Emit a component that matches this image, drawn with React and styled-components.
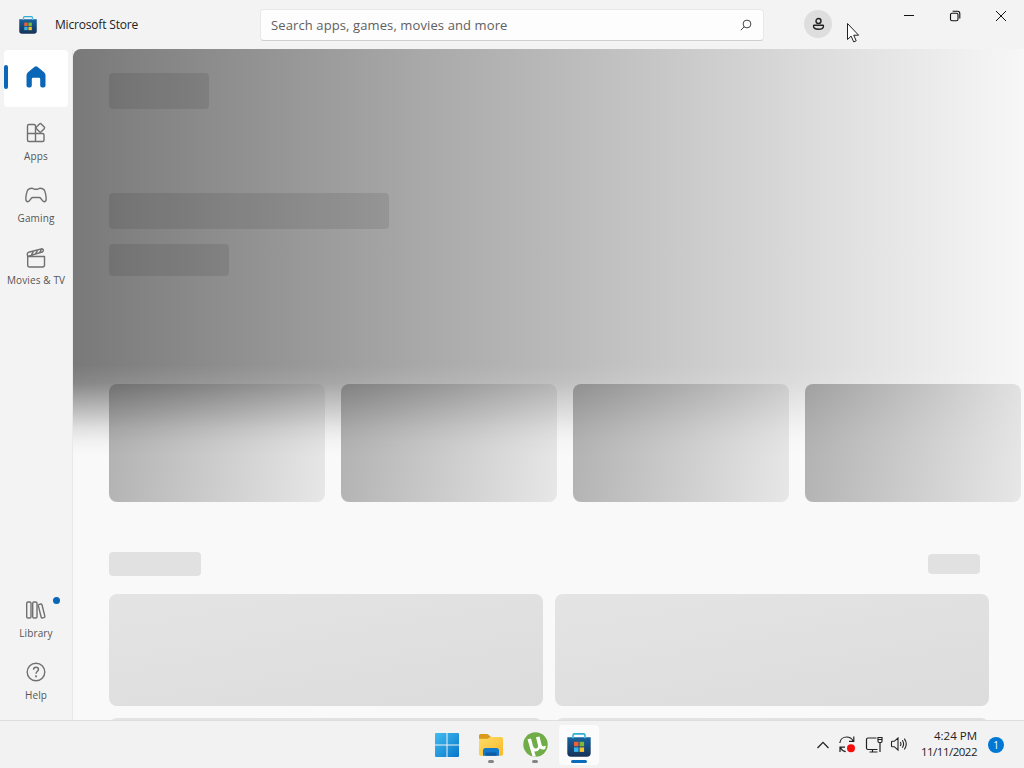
import React from 'react';
import styled, { createGlobalStyle } from 'styled-components';

const NAV_TOP = [
  { label: 'Apps', icon: AppsIcon },
  { label: 'Gaming', icon: GamingIcon },
  { label: 'Movies & TV', icon: MoviesIcon },
];

const NAV_BOTTOM = [
  { label: 'Library', icon: LibraryIcon, dot: true },
  { label: 'Help', icon: HelpIcon },
];

function App() {
  return (
    <>
      <GlobalStyle />
      <Desktop>
        <TitleBar />
        <Body>
          <Sidebar />
          <Content />
        </Body>
        <Taskbar />
        <Cursor width="14" height="22" viewBox="0 0 14 22">
          <path
            d="M1.500 1.500v16l3.600-3.400 2.600 5.800 2.500-1.100-2.500-5.600h4.900z"
            fill="#fff"
            stroke="#222"
            strokeWidth="1"
          />
        </Cursor>
      </Desktop>
    </>
  );
}

export default App;

function TitleBar() {
  return (
    <Header>
      <Brand>
        <StoreIcon size={18} />
        <AppName>Microsoft Store</AppName>
      </Brand>
      <SearchBox>
        <Placeholder>Search apps, games, movies and more</Placeholder>
        <svg width="12" height="12" viewBox="0 0 12 12" fill="none" stroke="#444">
          <circle cx="7" cy="5" r="3.9" />
          <path d="M4.200 7.800.8 11.200" />
        </svg>
      </SearchBox>
      <Avatar>
        <svg width="14" height="14" viewBox="0 0 14 14" fill="none" stroke="#222" strokeWidth="1.400">
          <circle cx="7.500" cy="4" r="2.500" />
          <path d="M3.200 8.200h8.600q.7 0 .7.700c0 2.300-2 3.400-5 3.400s-5-1.100-5-3.400q0-.7.700-.7z" />
        </svg>
      </Avatar>
      <WindowButtons>
        <svg width="12" height="12" viewBox="0 0 12 12" stroke="#111">
          <path d="M1 5.500h10" />
        </svg>
        <svg width="12" height="12" viewBox="0 0 12 12" fill="none" stroke="#111" strokeWidth="1.100">
          <rect x="1.500" y="3.300" width="7.500" height="7.500" rx="1.500" />
          <path d="M3.600 1.300h4.900q2.300 0 2.300 2.300v5" />
        </svg>
        <svg width="12" height="12" viewBox="0 0 12 12" stroke="#111">
          <path d="M1 1l10 10M11 1 1 11" />
        </svg>
      </WindowButtons>
    </Header>
  );
}

function Sidebar() {
  return (
    <Nav>
      <HomeItem>
        <Indicator />
        <HomeGlyph width="20" height="22" viewBox="0 0 20 22">
          <path
            d="M8.300 1Q10-.4 11.700 1l6.300 5.300Q19.500 7.600 19.500 9.500v9.900q0 2.100-2.100 2.100h-1.100q-2.100 0-2.100-2.100V13q0-1.200-1.200-1.200H7q-1.200 0-1.200 1.200v6.400q0 2.100-2.100 2.100H2.600Q.5 21.500.5 19.400V9.500Q.5 7.600 2 6.300z"
            fill="#0a66b7"
          />
        </HomeGlyph>
      </HomeItem>
      {NAV_TOP.map((item) => (
        <NavEntry key={item.label} item={item} />
      ))}
      <Spacer />
      {NAV_BOTTOM.map((item) => (
        <NavEntry key={item.label} item={item} />
      ))}
    </Nav>
  );
}

function NavEntry({ item }) {
  const Icon = item.icon;
  return (
    <NavItem>
      <Icon />
      <NavLabel>{item.label}</NavLabel>
      {item.dot && <Dot />}
    </NavItem>
  );
}

function Content() {
  return (
    <Main>
      <Hero>
        <HeroBar $w={100} $h={36} />
        <HeroBar $w={280} $h={36} $top={84} />
        <HeroBar $w={120} $h={32} $top={15} />
      </Hero>
      <CardRow>
        {[0, 1, 2, 3].map((n) => (
          <Card key={n} />
        ))}
      </CardRow>
      <SectionHead>
        <Bone $w={92} $h={24} />
        <Bone $w={52} $h={20} />
      </SectionHead>
      <Grid>
        {[0, 1, 2, 3].map((n) => (
          <Tile key={n} />
        ))}
      </Grid>
    </Main>
  );
}

function Taskbar() {
  return (
    <Bar>
      <Apps>
        <TaskButton>
          <WindowsIcon />
        </TaskButton>
        <TaskButton>
          <FolderIcon />
          <Running />
        </TaskButton>
        <TaskButton>
          <TorrentIcon />
          <Running />
        </TaskButton>
        <TaskButton $active>
          <StoreIcon size={24} />
          <Running $active />
        </TaskButton>
      </Apps>
      <Tray>
        <svg width="14" height="8" viewBox="0 0 14 8" fill="none" stroke="#222" strokeWidth="1.300">
          <path d="M1.500 7 7 1.400 12.500 7" />
        </svg>
        <SyncIcon />
        <NetworkIcon />
        <VolumeIcon />
        <Clock>
          <Time>4:24 PM</Time>
          <span>11/11/2022</span>
        </Clock>
        <Badge>1</Badge>
      </Tray>
    </Bar>
  );
}

/* ---------- icons ---------- */

function AppsIcon() {
  return (
    <Glyph width="22" height="22" viewBox="0 0 22 22">
      <path d="M10.500 11.500V4Q10.500 2.500 9 2.500H4Q2.500 2.500 2.500 4v14q0 1.500 1.500 1.500h13.500q1.500 0 1.500-1.500v-5q0-1.500-1.500-1.500h-15M10.500 11.500v8" />
      <rect x="12" y="2.500" width="6.700" height="6.700" rx="1.200" transform="rotate(45 15.350 5.850)" />
    </Glyph>
  );
}

function GamingIcon() {
  return (
    <Glyph width="24" height="22" viewBox="0 0 24 22">
      <path d="M8 4.200c1.200 0 1.500 1 2.600 1h2.800c1.100 0 1.400-1 2.600-1 2.600 0 4.100.7 4.900 3.200.8 2.400 1.300 5 1.300 7.300 0 2-.8 3.100-2.100 3.100-2.200 0-2.600-4.300-4.800-4.300H8.700c-2.200 0-2.600 4.300-4.800 4.300-1.300 0-2.100-1.100-2.100-3.100 0-2.300.5-4.900 1.300-7.300.8-2.500 2.300-3.200 4.900-3.200z" />
    </Glyph>
  );
}

function MoviesIcon() {
  return (
    <Glyph width="22" height="22" viewBox="0 0 22 22">
      <path d="M2.700 10.500h16.800V19q0 2-2 2H4.700q-2 0-2-2zM2.700 10.500l-.4-2.200q-.2-1.500 1.300-2L16.300 2.900q1.500-.4 1.900.9.500 1.600-1 2.200L2.700 10.300M6.300 9.100l2.300-4M10.500 7.900l2.300-4M14.600 6.700l2.200-3.800" />
    </Glyph>
  );
}

function LibraryIcon() {
  return (
    <Glyph width="22" height="22" viewBox="0 0 22 22">
      <rect x="1.700" y="3" width="4.300" height="16" rx="1.300" />
      <rect x="7.700" y="3" width="4.300" height="16" rx="1.300" />
      <rect x="14.700" y="5" width="3.800" height="14" rx="1.300" transform="rotate(-14 16.500 12)" />
    </Glyph>
  );
}

function HelpIcon() {
  return (
    <Glyph width="22" height="22" viewBox="0 0 22 22">
      <circle cx="11" cy="11" r="8.800" />
      <path d="M8.500 8.700q.1-2.500 2.500-2.500t2.500 2.200c0 1.800-2.500 2.100-2.500 4.400" />
      <circle cx="11" cy="15.300" r=".4" />
    </Glyph>
  );
}

function StoreIcon({ size }) {
  return (
    <svg width={size} height={size} viewBox="0 0 24 24">
      <defs>
        <linearGradient id="bag" x1="0" y1="0" x2="0" y2="1">
          <stop offset="0" stopColor="#17639f" />
          <stop offset="1" stopColor="#173257" />
        </linearGradient>
      </defs>
      <path d="M6 6V2.400Q6 .9 7.500.9h9Q18 .9 18 2.400V6" fill="none" stroke="#31abd8" strokeWidth="1.600" />
      <path d="M.3 4.300h23.400V20q0 3.700-3.700 3.700H4Q.3 23.700.3 20z" fill="url(#bag)" />
      <path d="M6 3V5.300M18 3V5.300" stroke="#55c9ef" strokeWidth="1.600" />
      <rect x="7" y="8.800" width="4.500" height="4.500" fill="#ee6038" />
      <rect x="12.600" y="8.800" width="4.500" height="4.500" fill="#80b83c" />
      <rect x="7" y="14.400" width="4.500" height="4.500" fill="#38b3ec" />
      <rect x="12.600" y="14.400" width="4.500" height="4.500" fill="#f6c52c" />
    </svg>
  );
}

function WindowsIcon() {
  return (
    <svg width="24" height="24" viewBox="0 0 24 24">
      <defs>
        <linearGradient id="win" gradientUnits="userSpaceOnUse" x1="0" y1="0" x2="24" y2="24">
          <stop offset="0" stopColor="#42bdf1" />
          <stop offset="1" stopColor="#0876ca" />
        </linearGradient>
      </defs>
      <path d="M0 1q0-1 1-1h10.500v11.500H0zM12.500 0H23q1 0 1 1v10.500H12.500zM0 12.500h11.500V24H1q-1 0-1-1zM12.500 12.500H24V23q0 1-1 1H12.500z" fill="url(#win)" />
    </svg>
  );
}

function FolderIcon() {
  return (
    <svg width="26" height="24" viewBox="0 0 26 24">
      <defs>
        <linearGradient id="folder" x1="0" y1="0" x2="1" y2="1">
          <stop offset="0" stopColor="#ffdc69" />
          <stop offset="1" stopColor="#f8b927" />
        </linearGradient>
      </defs>
      <path d="M1 9V2.500Q1 1 2.500 1h6.300q1 0 1.700.7L13 4v5z" fill="#d99a1b" />
      <path d="M1 5.700h8.500l2.800-1.800H23.500Q25 3.900 25 5.400V21q0 1.700-1.700 1.700H2.700Q1 22.700 1 21z" fill="url(#folder)" />
      <path d="M5 22.700v-5.200q0-2.500 2.500-2.500h11q2.500 0 2.500 2.500v5.200z" fill="#1478cb" />
      <path d="M7.500 19.500h11v3.200h-11z" fill="#0d5aa5" />
    </svg>
  );
}

function TorrentIcon() {
  return (
    <svg width="25" height="25" viewBox="0 0 25 25">
      <circle cx="12.500" cy="12.500" r="12.200" fill="#70ad49" />
      <path d="M4.500 7.200 8 6.400l2 7.700q.8 2.800 3.200 2.300 2.500-.6 1.700-3.400L13 5.300l3.500-.9 2 8q.5 2.300 2.400 1.900l2-.5-.7 3.100q-3.200 1.700-5.400-.6-1.400 3.500-5.500 3.200l1.600 5-3.400.1z" fill="#fff" />
    </svg>
  );
}

function SyncIcon() {
  return (
    <svg width="18" height="18" viewBox="0 0 18 18" fill="none" stroke="#222" strokeWidth="1.200">
      <path d="M1.800 7C2.200 3.500 5 1 8.700 1c3 0 5.200 1.500 6.500 4M15.800.5V5.400H11M2 16v-4.800h5M2.500 11.700c1.200 2.300 3 3.600 5.200 3.900" />
      <circle cx="13" cy="12.200" r="4" fill="#f80d0d" stroke="none" />
    </svg>
  );
}

function NetworkIcon() {
  return (
    <svg width="18" height="18" viewBox="0 0 18 18" fill="none" stroke="#222" strokeWidth="1.200">
      <path d="M11.500 2H3Q1.500 2 1.500 3.500v8.500q0 1.500 1.500 1.500h9.500M4.500 16h8M7.500 13.500V16M15 6.500v9.500" />
      <path d="M13 1.500h4v3.500q0 1.500-1 1.500h-2q-1 0-1-1.500zM13 3.500h4" />
    </svg>
  );
}

function VolumeIcon() {
  return (
    <svg width="18" height="16" viewBox="0 0 18 16" fill="none" stroke="#222" strokeWidth="1.100">
      <path d="M1.500 5v4q0 .7.700.7h2L8 13V1L4.200 4.300h-2q-.7 0-.7.700zM10.300 5q1.300 2 0 4M12.300 3.300q2.600 3.700 0 7.400M14.300 1.600q3.900 5.400 0 10.800" />
    </svg>
  );
}

/* ---------- styles ---------- */

const GlobalStyle = createGlobalStyle`
  * {
    box-sizing: border-box;
  }

  body {
    margin: 0;
    overflow: hidden;
    font-family: 'Open Sans', 'Noto Sans', sans-serif;
    color: #222;
  }

  svg {
    display: block;
    flex-shrink: 0;
  }
`;

const Desktop = styled.div`
  position: relative;
  display: flex;
  flex-direction: column;
  width: 1024px;
  height: 768px;
  overflow: hidden;
  background: #f3f3f3;
`;

const Header = styled.header`
  display: flex;
  height: 49px;
  padding-left: 19px;
  flex-shrink: 0;
`;

const Brand = styled.div`
  display: flex;
  align-items: center;
  gap: 18px;
  width: 241px;
`;

const AppName = styled.span`
  font-size: 12px;
  letter-spacing: -0.18px;
  white-space: nowrap;
`;

const SearchBox = styled.div`
  display: flex;
  align-items: center;
  justify-content: space-between;
  width: 504px;
  height: 32px;
  margin-top: 9px;
  padding: 0 11px 0 10px;
  background: #fdfdfd;
  border: 1px solid #e8e8e8;
  border-bottom-color: #cfcfcf;
  border-radius: 4px;
`;

const Placeholder = styled.span`
  font-size: 13px;
  letter-spacing: 0.11px;
  color: #606060;
  white-space: nowrap;
`;

const Avatar = styled.div`
  display: flex;
  align-items: center;
  justify-content: center;
  width: 28px;
  height: 28px;
  margin: 10px 0 0 40px;
  border-radius: 50%;
  background: #dedede;
`;

const WindowButtons = styled.div`
  display: flex;
  gap: 34px;
  margin: 10px 0 0 71px;
`;

const Body = styled.div`
  display: flex;
  height: 671px;
`;

const Nav = styled.nav`
  display: flex;
  flex-direction: column;
  width: 73px;
  padding-bottom: 9px;
  border-right: 1px solid #e9e9e9;
  flex-shrink: 0;
`;

const HomeItem = styled.div`
  display: flex;
  align-items: center;
  width: 64px;
  height: 57px;
  margin: 1px 0 3px 4px;
  padding-bottom: 3px;
  flex-shrink: 0;
  background: #fff;
  border-radius: 4px;
`;

const Indicator = styled.div`
  width: 4px;
  height: 24px;
  border-radius: 2px;
  background: #0a66b7;
`;

const HomeGlyph = styled.svg`
  margin-left: 18px;
`;

const NavItem = styled.div`
  position: relative;
  display: flex;
  flex-direction: column;
  align-items: center;
  height: 62px;
  padding-top: 12px;
  flex-shrink: 0;
`;

const NavLabel = styled.span`
  margin-top: 5px;
  font-size: 10px;
  line-height: 14px;
  letter-spacing: 0.12px;
  color: #555;
  white-space: nowrap;
`;

const Dot = styled.span`
  position: absolute;
  top: 10px;
  right: 12px;
  width: 7px;
  height: 7px;
  border-radius: 50%;
  background: #0a66b7;
`;

const Spacer = styled.div`
  flex: 1;
`;

const Glyph = styled.svg`
  fill: none;
  stroke: #707070;
  stroke-width: 1.4;
  stroke-linejoin: round;
`;

const Main = styled.main`
  flex: 1;
  min-width: 0;
  padding-left: 36px;
  overflow: hidden;
  border-top-left-radius: 8px;
  background:
    linear-gradient(
      rgba(249, 249, 249, 0) 316px,
      rgba(249, 249, 249, 0.1) 334px,
      rgba(249, 249, 249, 0.25) 344px,
      rgba(249, 249, 249, 0.53) 362px,
      rgba(249, 249, 249, 0.8) 379px,
      rgba(249, 249, 249, 0.94) 393px,
      #f9f9f9 406px
    ),
    linear-gradient(90deg, #797979, #929292 19%, #a9a9a9 37%, #bcbcbc 53%, #d0d0d0 69%, #e1e1e1 82%, #f7f7f7);
`;

const Hero = styled.section`
  height: 335px;
  padding-top: 24px;
`;

const HeroBar = styled.div`
  width: ${(p) => p.$w}px;
  height: ${(p) => p.$h}px;
  margin-top: ${(p) => p.$top || 0}px;
  border-radius: 4px;
  background: rgba(0, 0, 0, 0.09);
`;

const CardRow = styled.section`
  display: flex;
  gap: 16px;
`;

const Card = styled.div`
  width: 216px;
  height: 118px;
  flex-shrink: 0;
  border-radius: 8px;
  background: linear-gradient(98deg, rgba(72, 72, 72, 0.41), rgba(130, 130, 130, 0.15));
`;

const SectionHead = styled.div`
  display: flex;
  align-items: center;
  justify-content: space-between;
  width: 871px;
  height: 24px;
  margin-top: 50px;
`;

const Bone = styled.div`
  width: ${(p) => p.$w}px;
  height: ${(p) => p.$h}px;
  border-radius: 4px;
  background: #e1e1e1;
`;

const Grid = styled.section`
  display: grid;
  grid-template-columns: 434px 434px;
  grid-auto-rows: 112px;
  gap: 12px;
  margin-top: 18px;
`;

const Tile = styled.div`
  border-radius: 8px;
  background: linear-gradient(170deg, #e4e4e4, #dcdcdc);
`;

const Bar = styled.footer`
  display: flex;
  align-items: center;
  height: 48px;
  padding-left: 427px;
  border-top: 1px solid #dedede;
  background: #f2f2f2;
`;

const Apps = styled.div`
  display: flex;
  gap: 4px;
`;

const TaskButton = styled.div`
  position: relative;
  display: flex;
  align-items: center;
  justify-content: center;
  width: 40px;
  height: 40px;
  border-radius: 4px;
  background: ${(p) => (p.$active ? '#fcfcfc' : 'transparent')};
`;

const Running = styled.span`
  position: absolute;
  bottom: ${(p) => (p.$active ? 2 : 2)}px;
  left: 50%;
  width: ${(p) => (p.$active ? 16 : 6)}px;
  height: 3px;
  border-radius: 2px;
  transform: translateX(-50%);
  background: ${(p) => (p.$active ? '#0a6cbd' : '#858585')};
`;

const Tray = styled.div`
  display: flex;
  align-items: center;
  margin-left: auto;
  padding-right: 20px;
  gap: 8px;

  svg:nth-of-type(3) {
    margin: 0 -1px 0 1px;
  }
`;

const Clock = styled.div`
  display: flex;
  flex-direction: column;
  align-items: flex-end;
  width: 61px;
  padding-bottom: 2px;
  font-size: 11.5px;
  line-height: 16px;
  letter-spacing: -0.5px;
  white-space: nowrap;
`;

const Time = styled.span`
  letter-spacing: 0;
`;

const Badge = styled.span`
  display: flex;
  align-items: center;
  justify-content: center;
  width: 16px;
  height: 16px;
  margin-left: 3px;
  border-radius: 50%;
  background: #0078d4;
  color: #fff;
  font-size: 10px;
`;

const Cursor = styled.svg`
  position: absolute;
  top: 22px;
  left: 846px;
`;
